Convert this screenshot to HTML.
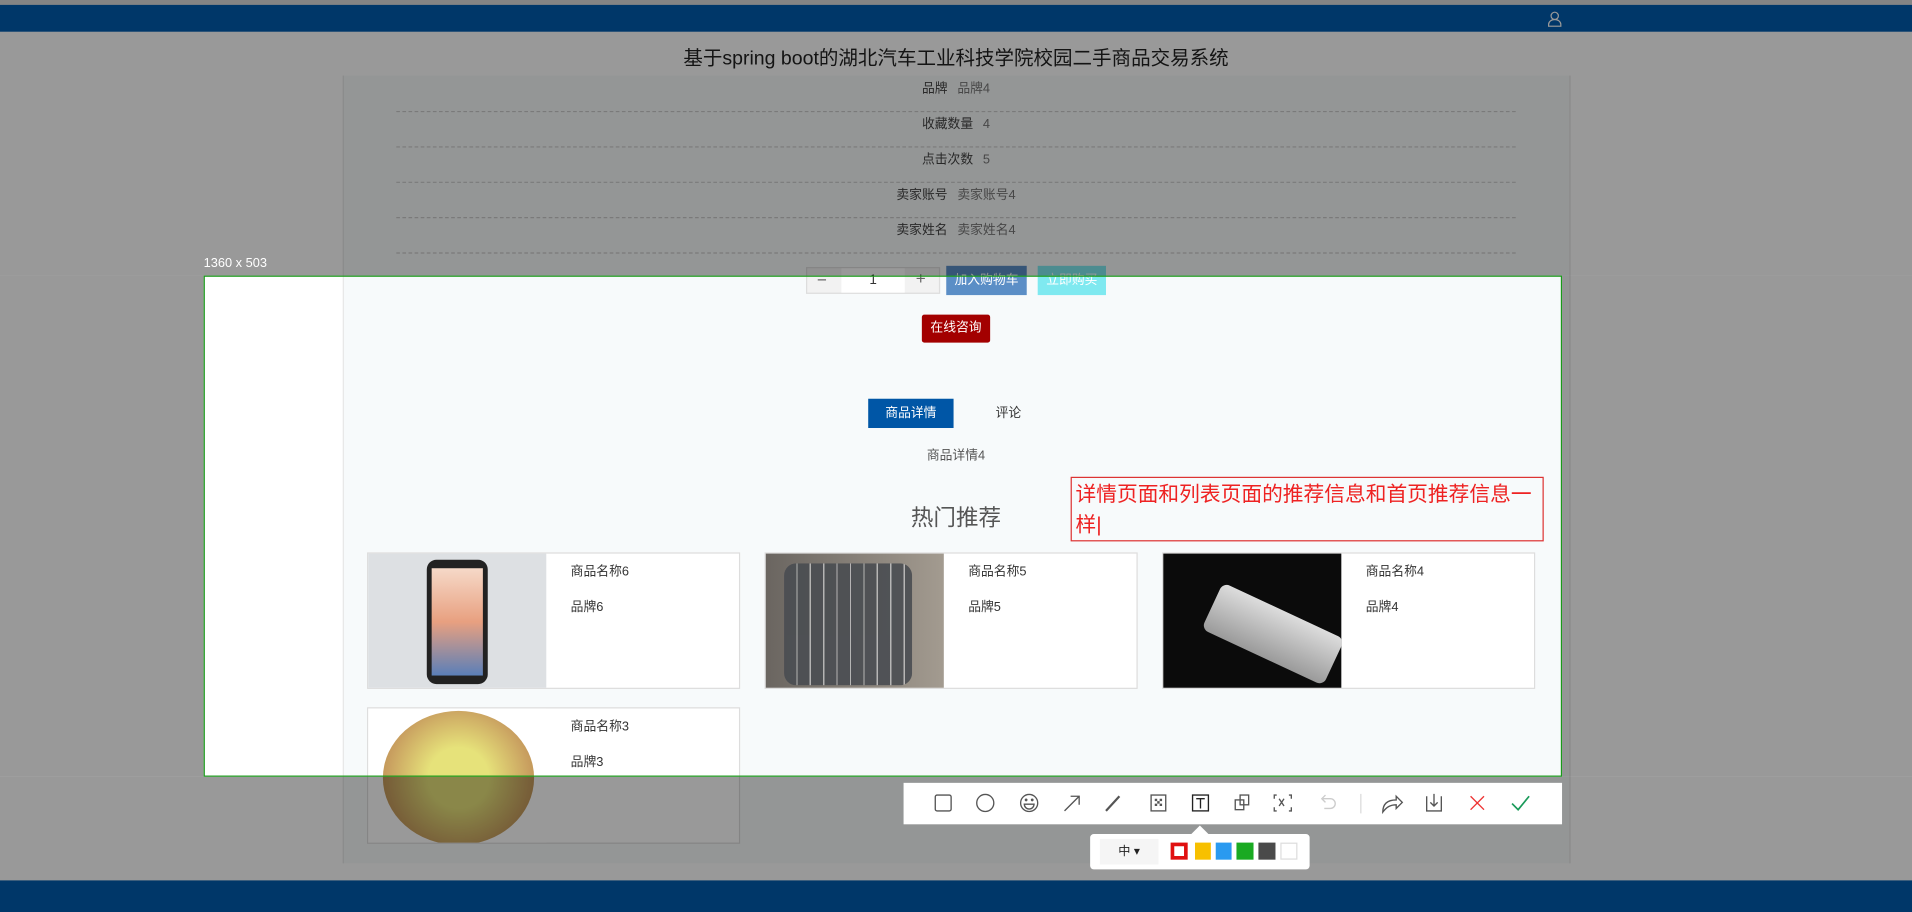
<!DOCTYPE html>
<html><head><meta charset="utf-8"><style>
*{margin:0;padding:0;box-sizing:border-box}
html,body{width:1912px;height:912px;overflow:hidden;background:#fff}
#w{position:absolute;left:0;top:0;width:1568px;height:748px;transform:scale(1.219388);transform-origin:0 0;font-family:"Liberation Sans","Noto Sans CJK SC",sans-serif;background:#fff}
.a{position:absolute}
.row{position:absolute;left:325px;width:918px;height:29px;border-bottom:1px dashed #ccc;font-size:10.5px;color:#444;text-align:center;line-height:20px}
.row span{color:#777;margin-left:8px}
.card{position:absolute;width:306px;height:112px;border:1px solid #ddd;background:#fff}
.card .im{position:absolute;left:0;top:0;width:146px;height:110px;overflow:hidden}
.card .t1{position:absolute;left:166px;top:7px;font-size:10.5px;color:#333}
.card .t2{position:absolute;left:166px;top:36px;font-size:10.5px;color:#333}
.dim{position:absolute;background:rgba(0,0,0,0.4)}
</style></head><body><div id="w">
<div class="a" style="left:0;top:0;width:1568px;height:4px;background:#ddd"></div>
<div class="a" style="left:0;top:4px;width:1568px;height:22px;background:#005cb0"></div>
<svg class="a" style="left:1269px;top:9px" width="12" height="13" viewBox="0 0 12 13"><circle cx="6" cy="4" r="3" fill="none" stroke="#fff" stroke-width="1"/><path d="M1 12.5v-1.5a5 4 0 0 1 10 0v1.5z" fill="none" stroke="#fff" stroke-width="1"/></svg>
<div class="a" style="left:0;top:34px;width:1568px;text-align:center;font-size:16px;color:#222">基于spring boot的湖北汽车工业科技学院校园二手商品交易系统</div>
<div class="a" style="left:281px;top:62px;width:1007px;height:646px;border-left:1px solid #e6e6e6;border-right:1px solid #e6e6e6;background:#f7fafb"></div>
<div class="a" style="left:167px;top:62px;width:114px;height:646px;background:#fff"></div>
<div class="row" style="top:63px">品牌<span>品牌4</span></div>
<div class="row" style="top:92px">收藏数量<span>4</span></div>
<div class="row" style="top:121px">点击次数<span>5</span></div>
<div class="row" style="top:150px">卖家账号<span>卖家账号4</span></div>
<div class="row" style="top:179px">卖家姓名<span>卖家姓名4</span></div>
<div class="a" style="left:661px;top:219px;width:110px;height:22px;border:1px solid #ddd;background:#f2f2f2"></div>
<div class="a" style="left:690px;top:220px;width:52px;height:20px;background:#fff;text-align:center;font-size:11px;line-height:20px;color:#333">1</div>
<div class="a" style="left:670px;top:221px;font-size:14px;color:#666">−</div>
<div class="a" style="left:751px;top:220px;font-size:14px;color:#666">+</div>
<div class="a" style="left:776px;top:218px;width:66px;height:24px;background:#5b8ec6;color:#fff;font-size:10.5px;text-align:center;line-height:24px">加入购物车</div>
<div class="a" style="left:851px;top:218px;width:56px;height:24px;background:#7fe9f0;color:#fff;font-size:10.5px;text-align:center;line-height:24px">立即购买</div>
<div class="a" style="left:756px;top:258px;width:56px;height:23px;background:#a30000;color:#fff;font-size:10.5px;text-align:center;line-height:23px;border-radius:2px">在线咨询</div>
<div class="a" style="left:712px;top:327px;width:70px;height:24px;background:#0056a6;color:#fff;font-size:10.5px;text-align:center;line-height:24px">商品详情</div>
<div class="a" style="left:797px;top:327px;width:60px;height:24px;color:#333;font-size:10.5px;text-align:center;line-height:24px">评论</div>
<div class="a" style="left:0;top:366px;width:1568px;text-align:center;font-size:10.5px;color:#555">商品详情4</div>
<div class="a" style="left:0;top:411px;width:1568px;text-align:center;font-size:18.5px;color:#555">热门推荐</div>
<div class="card" style="left:301px;top:453px"><div class="im" style="background:#dde0e3"><div class="a" style="left:48px;top:5px;width:50px;height:102px;border-radius:8px;background:#222"></div><div class="a" style="left:52px;top:12px;width:42px;height:88px;background:linear-gradient(#f6d9c8,#e8a080 50%,#5a7fb8)"></div></div><div class="t1">商品名称6</div><div class="t2">品牌6</div></div>
<div class="card" style="left:627px;top:453px"><div class="im" style="background:linear-gradient(90deg,#6a6560,#a39b90)"><div class="a" style="left:15px;top:8px;width:105px;height:100px;background:repeating-linear-gradient(90deg,#4a4d52 0 10px,#bbb 10px 11px),#555;border-radius:10px;opacity:.9"></div></div><div class="t1">商品名称5</div><div class="t2">品牌5</div></div>
<div class="card" style="left:953px;top:453px"><div class="im" style="background:#0b0b0b"><div class="a" style="left:35px;top:45px;width:110px;height:42px;background:linear-gradient(#ddd,#9a9a9a);transform:rotate(25deg);border-radius:6px"></div></div><div class="t1">商品名称4</div><div class="t2">品牌4</div></div>
<div class="card" style="left:301px;top:580px"><div class="im" style="background:#fff"><div class="a" style="left:12px;top:2px;width:124px;height:110px;border-radius:50%;background:radial-gradient(circle,#e6e27a 0 30%,#c9a060 70%,#b07a40)"></div></div><div class="t1">商品名称3</div><div class="t2">品牌3</div></div>
<div class="a" style="left:878px;top:391px;width:388px;height:53px;border:1px solid #d33;color:#e22;font-size:17px;line-height:25px;padding:1px 0 0 3px">详情页面和列表页面的推荐信息和首页推荐信息一样|</div>
<div class="a" style="left:0;top:722px;width:1568px;height:26px;background:#005cb0"></div>
<div class="dim" style="left:0;top:0;width:1568px;height:226px"></div>
<div class="dim" style="left:0;top:637px;width:1568px;height:111px"></div>
<div class="dim" style="left:0;top:226px;width:167px;height:411px"></div>
<div class="dim" style="left:1281px;top:226px;width:287px;height:411px"></div>
<div class="a" style="left:167px;top:226px;width:1114px;height:411px;border:1px solid #1a9a1a"></div>
<div class="a" style="left:167px;top:210px;font-size:10.5px;color:#fff">1360 x 503</div>
<div class="a" style="left:741px;top:642px;width:540px;height:34px;background:#fff"></div>
<svg class="a" style="left:741px;top:642px" width="540" height="34" fill="none" stroke="#555" stroke-width="1.1">
<rect x="26" y="10" width="13" height="13" rx="1.5"/>
<ellipse cx="67" cy="16.5" rx="7" ry="7"/>
<circle cx="103" cy="16.5" r="7"/><path d="M99 17.5a4 4 0 0 0 8 0z"/><circle cx="100.5" cy="14" r=".6"/><circle cx="105.5" cy="14" r=".6"/>
<path d="M132 23l12-12M137 11h7v7"/>
<path d="M166 23l11-12" stroke-width="1.8"/>
<rect x="203" y="10" width="12" height="13"/><path d="M206 13h2v2h-2zM210 13h2v2h-2zM208 15h2v2h-2zM206 17h2v2h-2zM210 17h2v2h-2z" fill="#555" stroke="none"/>
<rect x="237" y="10" width="13" height="13" stroke="#222"/><path d="M240 13h7M243.5 13v8" stroke="#222"/>
<rect x="272" y="14" width="7" height="8"/><rect x="276" y="10" width="7" height="8"/>
<path d="M306 10h-2v3M316 10h2v3M306 23h-2v-3M316 23h2v-3M308 13l4 6M312 13l-4 6"/>
<path d="M344 13h6a4 4 0 0 1 0 8h-5M346 10l-3 3 3 3" stroke="#ccc"/>
<path d="M375 9v16" stroke="#ddd"/>
<path d="M393 24c0-7 4-10 11-10v-3l5 5-5 5v-3c-5 0-8 2-11 6z"/>
<path d="M429 11v12h12v-12M435 9v10M432 16l3 3 3-3"/>
<path d="M465 11l11 11M476 11l-11 11" stroke="#e33"/>
<path d="M499 17l5 5 9-11" stroke="#1a9a5a" stroke-width="1.4"/>
</svg>
<div class="a" style="left:977px;top:677px;width:0;height:0;border-left:7px solid transparent;border-right:7px solid transparent;border-bottom:7px solid #fff"></div>
<div class="a" style="left:894px;top:684px;width:180px;height:29px;background:#fff;border-radius:3px"></div>
<div class="a" style="left:902px;top:688px;width:48px;height:21px;background:#f5f5f5;font-size:10px;text-align:center;line-height:21px;color:#222">中 ▾</div>
<div class="a" style="left:960px;top:691px;width:14px;height:14px;border:3px solid #e01010;background:#fff"></div>
<div class="a" style="left:980px;top:691px;width:13px;height:14px;background:#f7c000"></div>
<div class="a" style="left:997px;top:691px;width:13px;height:14px;background:#2a9af0"></div>
<div class="a" style="left:1014px;top:691px;width:14px;height:14px;background:#1aaa22"></div>
<div class="a" style="left:1032px;top:691px;width:14px;height:14px;background:#4a4a4a"></div>
<div class="a" style="left:1050px;top:691px;width:14px;height:14px;background:#fff;border:1px solid #ddd"></div>
</div></body></html>
